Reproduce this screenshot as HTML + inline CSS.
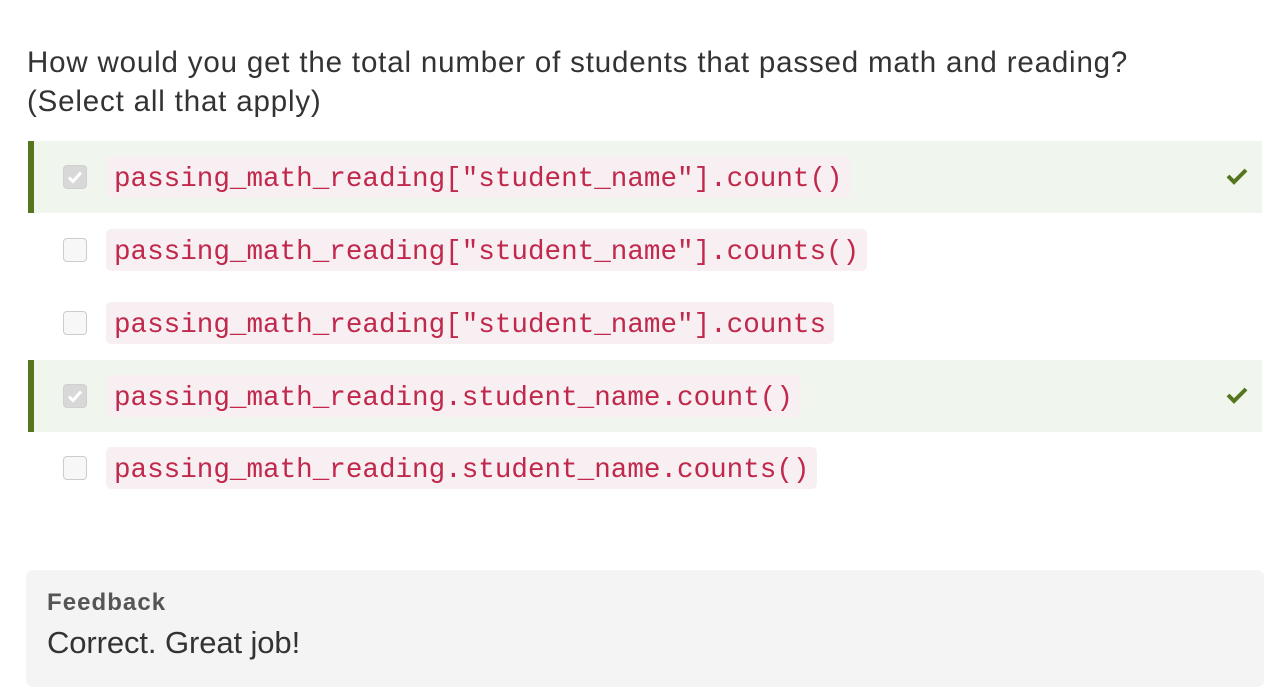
<!DOCTYPE html>
<html><head><meta charset="utf-8"><style>
body{margin:0;width:1270px;height:690px;background:#fff;font-family:"Liberation Sans",sans-serif;color:#333;position:relative;overflow:hidden}
.q{position:absolute;left:27px;top:43px;font-size:29.5px;letter-spacing:0.83px;line-height:39px;color:#333}
.row{position:absolute;left:28px;width:1234px;height:72px}
.ok{background:#f0f6ed;border-left:6px solid #55761f;width:1228px}
.cb{position:absolute;left:35px;top:24px;width:24px;height:24px;border:1px solid #ccc;border-radius:4px;background:#f7f7f7;box-sizing:border-box}
.ok .cb{left:29px;background:#d8d8d8;border-color:#d0d0d0}
.cb svg{position:absolute;left:3px;top:3px}
.code{position:absolute;left:78px;top:15px;height:42px;line-height:48px;padding:0 8px;background:#f8eff2;border-radius:5px;font-family:"Liberation Mono",monospace;font-size:27.6px;color:#c0284c;overflow:hidden}
.ok .code{left:72px}
.tick{position:absolute;right:14px;top:26px}
.fb{position:absolute;left:26px;top:570px;width:1238px;height:117px;background:#f4f4f4;border-radius:7px}
.fb .h{position:absolute;left:21px;top:19px;font-size:24px;letter-spacing:1.05px;font-weight:bold;color:#555}
.fb .t{position:absolute;left:21px;top:55px;font-size:31px;letter-spacing:-0.1px;color:#333}
</style></head><body>
<div class="q">How would you get the total number of students that passed math and reading?<br>(Select all that apply)</div>

<div class="row ok" style="top:141px"><div class="cb"><svg width="16" height="16" viewBox="0 0 16 16"><path d="M2 8.5l4 4 8-9" fill="none" stroke="#fff" stroke-width="3"/></svg></div><div class="code">passing_math_reading["student_name"].count()</div><svg class="tick" width="22" height="18" viewBox="0 0 22 18"><path d="M2 9l6 6L20 3" fill="none" stroke="#55761f" stroke-width="4"/></svg></div>
<div class="row" style="top:214px"><div class="cb"></div><div class="code">passing_math_reading["student_name"].counts()</div></div>
<div class="row" style="top:287px"><div class="cb"></div><div class="code">passing_math_reading["student_name"].counts</div></div>
<div class="row ok" style="top:360px"><div class="cb"><svg width="16" height="16" viewBox="0 0 16 16"><path d="M2 8.5l4 4 8-9" fill="none" stroke="#fff" stroke-width="3"/></svg></div><div class="code">passing_math_reading.student_name.count()</div><svg class="tick" width="22" height="18" viewBox="0 0 22 18"><path d="M2 9l6 6L20 3" fill="none" stroke="#55761f" stroke-width="4"/></svg></div>
<div class="row" style="top:432px"><div class="cb"></div><div class="code">passing_math_reading.student_name.counts()</div></div>

<div class="fb"><div class="h">Feedback</div><div class="t">Correct. Great job!</div></div>
</body></html>
